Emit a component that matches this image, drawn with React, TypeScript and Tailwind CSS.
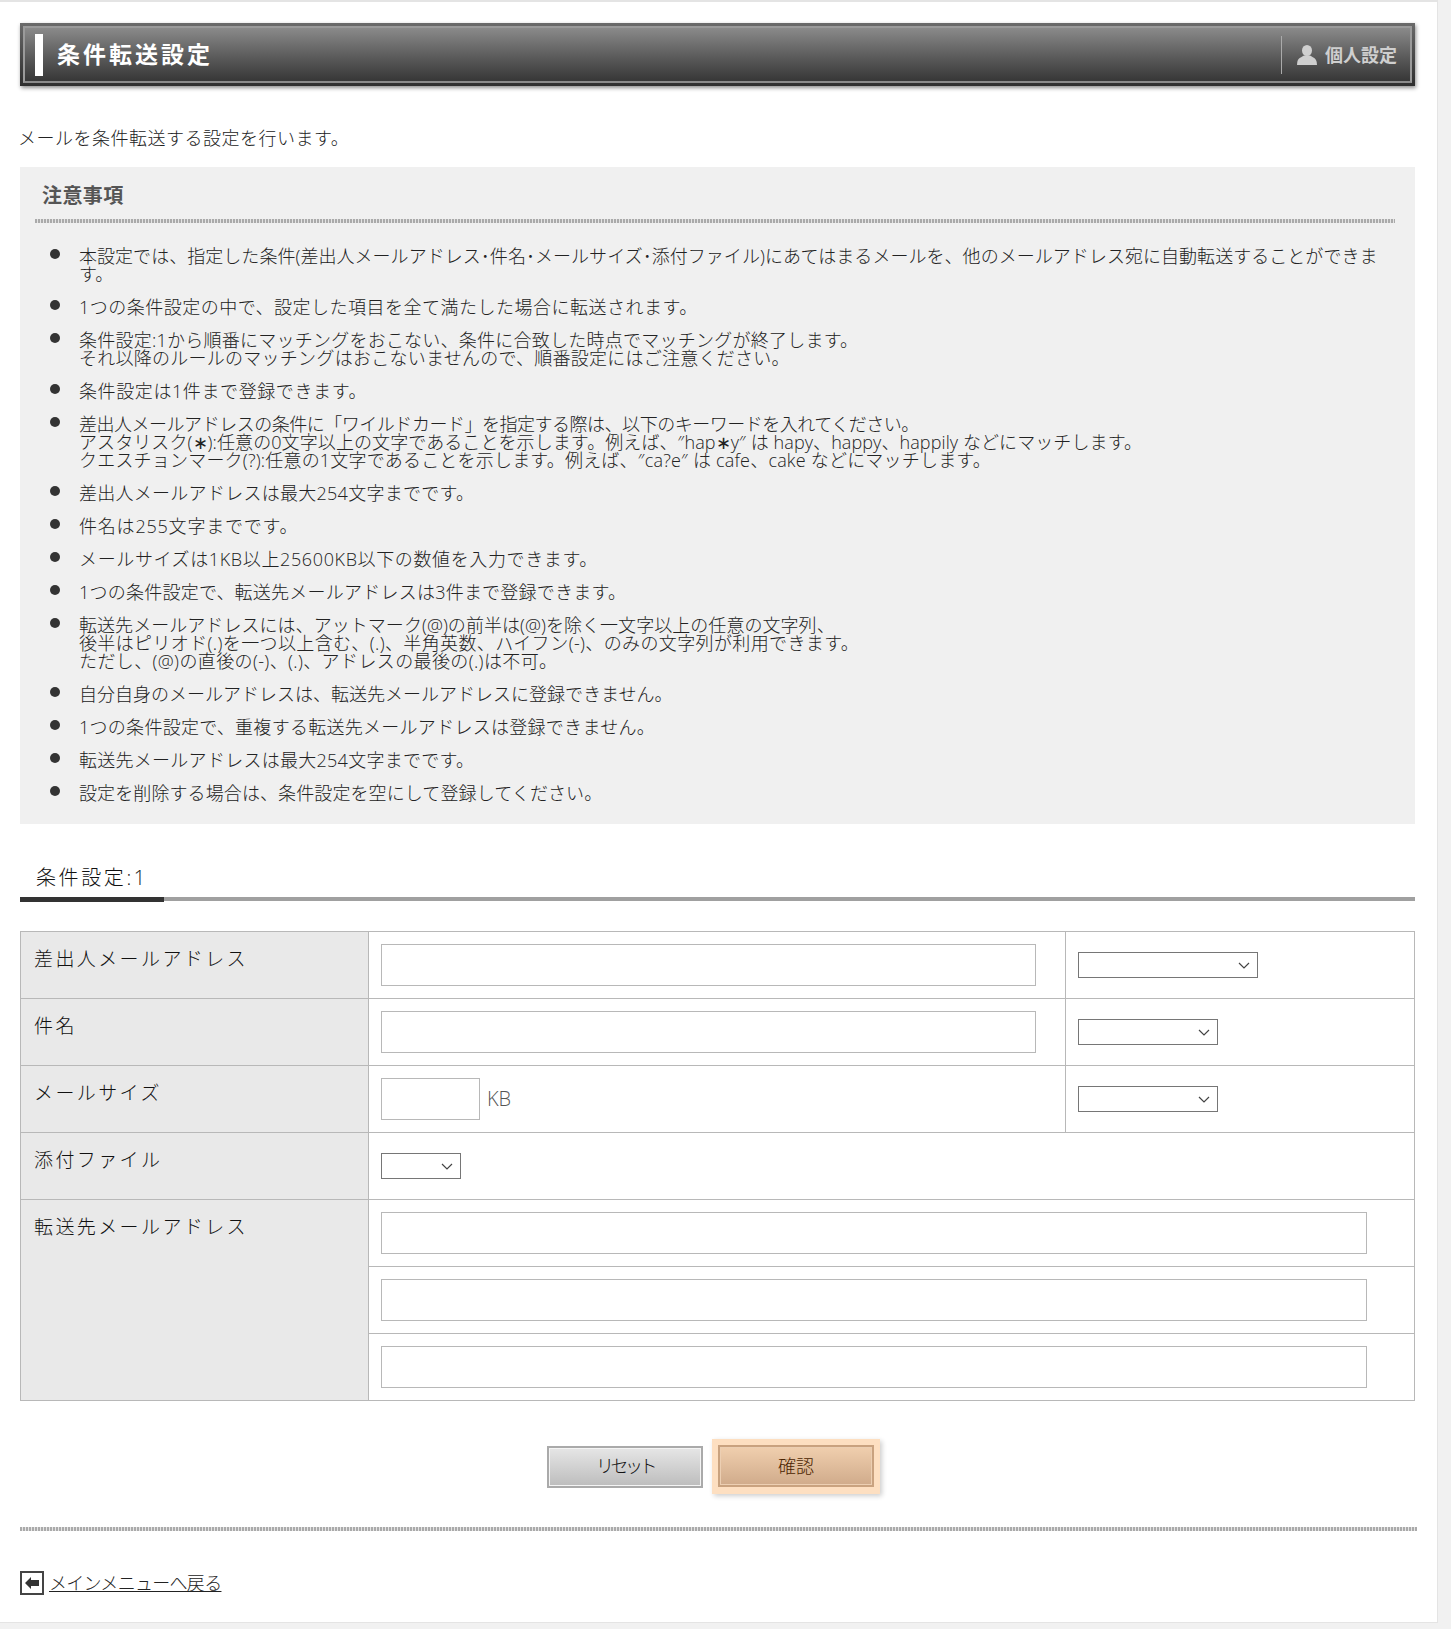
const font = "font-['Open_Sans','Noto_Sans_CJK_JP',sans-serif] font-light";

// letter spacing is set per line, the original font has proportional kana
const notes: [string, string][][] = [
  [
    ["本設定では、指定した条件(差出人メールアドレス･件名･メールサイズ･添付ファイル)にあてはまるメールを、他のメールアドレス宛に自動転送することができま", "tracking-[0.04px]"],
    ["す。", ""],
  ],
  [["1つの条件設定の中で、設定した項目を全て満たした場合に転送されます。", "tracking-[0.5px]"]],
  [
    ["条件設定:1から順番にマッチングをおこない、条件に合致した時点でマッチングが終了します。", "tracking-[0.24px]"],
    ["それ以降のルールのマッチングはおこないませんので、順番設定にはご注意ください。", "tracking-[0.26px]"],
  ],
  [["条件設定は1件まで登録できます。", "tracking-[0.6px]"]],
  [
    ["差出人メールアドレスの条件に「ワイルドカード」を指定する際は、以下のキーワードを入れてください。", "tracking-[-0.48px]"],
    ["アスタリスク(∗):任意の0文字以上の文字であることを示します。例えば、″hap∗y″ は hapy、happy、happily などにマッチします。", "tracking-[0.09px]"],
    ["クエスチョンマーク(?):任意の1文字であることを示します。例えば、″ca?e″ は cafe、cake などにマッチします。", "tracking-[0.2px]"],
  ],
  [["差出人メールアドレスは最大254文字までです。", "tracking-[0.27px]"]],
  [["件名は255文字までです。", "tracking-[0.8px]"]],
  [["メールサイズは1KB以上25600KB以下の数値を入力できます。", "tracking-[0.63px]"]],
  [["1つの条件設定で、転送先メールアドレスは3件まで登録できます。", "tracking-[0.23px]"]],
  [
    ["転送先メールアドレスには、アットマーク(@)の前半は(@)を除く一文字以上の任意の文字列、", "tracking-[0.05px]"],
    ["後半はピリオド(.)を一つ以上含む、(.)、半角英数、ハイフン(-)、のみの文字列が利用できます。", "tracking-[0.37px]"],
    ["ただし、(@)の直後の(-)、(.)、アドレスの最後の(.)は不可。", "tracking-[0.38px]"],
  ],
  [["自分自身のメールアドレスは、転送先メールアドレスに登録できません。", ""]],
  [["1つの条件設定で、重複する転送先メールアドレスは登録できません。", "tracking-[0.28px]"]],
  [["転送先メールアドレスは最大254文字までです。", "tracking-[0.27px]"]],
  [["設定を削除する場合は、条件設定を空にして登録してください。", "tracking-[0.1px]"]],
];

const dotted =
  "h-1 bg-[repeating-linear-gradient(90deg,#aaaaaa_0,#aaaaaa_2px,#e4e4e4_2px,#e4e4e4_3px)]";

function TextBox({ className }: { className: string }) {
  return <input type="text" className={`h-[42px] border border-[#b8b8b8] bg-white block ${className}`} />;
}

function Select({ className }: { className: string }) {
  return (
    <div className={`relative h-[26px] ${className}`}>
      <select className="block h-full w-full appearance-none border border-[#767676] bg-white">
        <option></option>
      </select>
      <svg viewBox="0 0 12 7" className="pointer-events-none absolute right-[8px] top-[10px] h-[7px] w-3" fill="none" stroke="#444" strokeWidth="1.2">
        <path d="M1 1 L6 6 L11 1" />
      </svg>
    </div>
  );
}

const labelCell =
  "border border-[#b8b8b8] bg-[#e9e9e9] pl-[13px] pt-[15px] text-left align-top font-light text-[19px] leading-[24px] tracking-[2.4px] text-[#111]";

const cell = "border border-[#b8b8b8] h-[67px] pl-3 align-middle";

export default function App() {
  return (
    <div className={`${font} h-[1629px] bg-[#f1f1f1] text-[18px] text-[#222]`}>
      <div className="h-[1623px] w-[1438px] border-t-2 border-b border-r border-[#e4e4e4] bg-white px-5 pt-[21px]">
        <div className="h-[63px] w-[1395px] bg-gradient-to-b from-[#6a6a6a] to-[#2e2e2e] p-[3px] shadow-[1px_2px_4px_rgba(0,0,0,0.45)]">
          <div className="flex h-full items-center border-2 border-[#9a9a9a] border-b-[#8a8a8a] bg-gradient-to-b from-[#8a8a8a] via-[#5f5f5f] to-[#373737] pl-[10px]">
            <div className="h-[42px] w-2 bg-white" />
            <h1 className="ml-[14px] text-[23px] font-bold tracking-[3px] text-white">条件転送設定</h1>
            <div className="ml-auto flex h-[38px] items-center border-l border-[#aaaaaa] pl-[15px] pr-[13px] text-[18px] font-bold text-[#cfcfcf]">
              <svg viewBox="0 0 20 20" className="mr-2 h-5 w-5" fill="#cfcfcf">
                <ellipse cx="10" cy="5.5" rx="5" ry="5.5" />
                <path d="M7 10.5 C5 12 0.8 13 0.3 17 L0 20 H20 L19.7 17 C19.2 13 15 12 13 10.5 Z" />
              </svg>
              <span className="mt-[2px]">個人設定</span>
            </div>
          </div>
        </div>

        <p className="-ml-[2px] mt-[39px] h-[27px] text-[18px] leading-[27px] tracking-[0.5px]">メールを条件転送する設定を行います。</p>

        <section className="mt-[15px] h-[657px] w-[1395px] bg-[#f0f0f0] pl-[15px] pr-[20px] pt-[17px]">
          <h2 className="pl-[7px] text-[20px] font-bold leading-6 tracking-[0.4px] text-[#555]">注意事項</h2>
          <div className={`${dotted} mt-[11px]`} />
          <ul className="mt-[25px]">
            {notes.map((lines, i) => (
              <li key={i} className="mb-[15px] flex">
                <span className="ml-[15px] mr-5 mt-[1px] h-[10px] w-[10px] shrink-0 rounded-full bg-[#333]" />
                <div className="-ml-[1px] -mt-[1px] mb-[1px] text-[18px] leading-[18px] whitespace-nowrap">
                  {lines.map(([line, spacing], j) => (
                    <div key={j} className={spacing}>
                      {line}
                    </div>
                  ))}
                </div>
              </li>
            ))}
          </ul>
        </section>

        <div className="mt-[36px] h-[41px] w-[1395px] border-b-4 border-[#a0a0a0]">
          <div className="h-[42px] w-[144px] border-b-[5px] border-[#333] pl-4 text-[20px] leading-[36px] tracking-[2.6px] text-[#111]">
            条件設定:1
          </div>
        </div>

        <table className="mt-[30px] w-[1395px] table-fixed border-collapse">
          <colgroup>
            <col className="w-[348px]" />
            <col className="w-[697px]" />
            <col />
          </colgroup>
          <tbody>
            <tr>
              <th className={labelCell}>差出人メールアドレス</th>
              <td className={cell}>
                <TextBox className="w-[655px]" />
              </td>
              <td className={cell}>
                <Select className="w-[180px]" />
              </td>
            </tr>
            <tr>
              <th className={labelCell}>件名</th>
              <td className={cell}>
                <TextBox className="w-[655px]" />
              </td>
              <td className={cell}>
                <Select className="w-[140px]" />
              </td>
            </tr>
            <tr>
              <th className={labelCell}>メールサイズ</th>
              <td className={cell}>
                <div className="flex items-center">
                  <TextBox className="w-[99px]" />
                  <span className="ml-[7px] text-[20px] text-[#555]">KB</span>
                </div>
              </td>
              <td className={cell}>
                <Select className="w-[140px]" />
              </td>
            </tr>
            <tr>
              <th className={labelCell}>添付ファイル</th>
              <td colSpan={2} className={cell}>
                <Select className="w-20" />
              </td>
            </tr>
            <tr>
              <th rowSpan={3} className={labelCell}>
                転送先メールアドレス
              </th>
              <td colSpan={2} className={cell}>
                <TextBox className="w-[986px]" />
              </td>
            </tr>
            <tr>
              <td colSpan={2} className={cell}>
                <TextBox className="w-[986px]" />
              </td>
            </tr>
            <tr>
              <td colSpan={2} className={cell}>
                <TextBox className="w-[986px]" />
              </td>
            </tr>
          </tbody>
        </table>

        <div className="mt-[38px] flex items-center justify-center pr-[10px]">
          <button className="h-[42px] w-[156px] border-2 border-[#aaaaaa] bg-gradient-to-b from-[#e6e6e6] to-[#bdbdbd] text-[18px] tracking-[-3.5px] text-[#111] shadow-[inset_0_0_0_1px_#f4f4f4]">
            リセット
          </button>
          <div className="ml-[9px] bg-[#fddfc1] p-[6px] pb-[7px] shadow-[2px_2px_5px_rgba(0,0,0,0.2)]">
            <button className="block h-[42px] w-[156px] border-2 border-[#c9a27f] bg-gradient-to-b from-[#f0cfae] to-[#d0ab8b] text-[18px] text-[#4a2400] shadow-[inset_0_0_0_1px_#eccfb3]">
              確認
            </button>
          </div>
        </div>

        <div className={`${dotted} mt-[33px]`} />

        <div className="mt-[40px] flex items-center">
          <div className="flex h-6 w-6 items-center justify-center border-2 border-[#444] bg-white">
            <svg viewBox="0 0 14 12" className="h-3 w-[14px]" fill="#333">
              <path d="M0 6 L6 0 V3 H14 V9 H6 V12 Z" />
            </svg>
          </div>
          <a href="#" className="ml-[5px] text-[18px] leading-6 tracking-[-0.7px] underline">
            メインメニューへ戻る
          </a>
        </div>
      </div>
    </div>
  );
}
